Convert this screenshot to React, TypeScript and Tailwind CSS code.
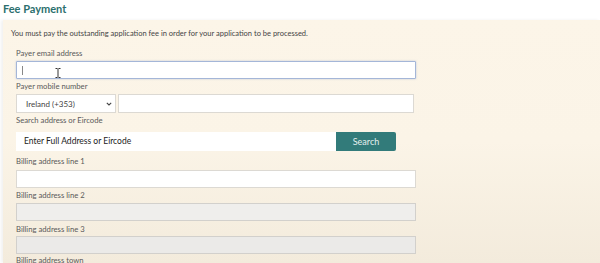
import React from "react";

function Label(props: { text: string; className?: string }) {
    return <div className={"h-[10px] leading-[13px] text-[7.7px] text-[#5a5a5a] " + (props.className ?? "")}>{props.text}</div>;
}

export default function App() {
    return (
        <div className="w-[600px] h-[263px] overflow-hidden bg-white" style={{ fontFamily: "Lato, 'Open Sans', sans-serif" }}>
            <h2 className="h-[20px] pl-[3px] pt-[2px] text-[11px] leading-[14px] font-bold text-[#2c6f6e]">Fee Payment</h2>
            <div className="relative ml-[3px] h-[243px] bg-gradient-to-b from-[#fcf5e8] via-[#fbf4e7] to-[#f3ebdc] pl-[8px] shadow-[-2px_0_3px_rgba(0,0,0,0.06)]">
                <div className="pt-[8px] h-[18px] leading-[12px] text-[7.5px] text-[#444]">
                    You must pay the outstanding application fee in order for your application to be processed.
                </div>
                <div className="pl-[5px] flex flex-col">
                    <Label text="Payer email address" className="mt-[9px]" />
                    <div className="relative mt-[4px] w-[400px] h-[18px] bg-white border border-[#a4b6d8] rounded-[1px] shadow-[0_0_2px_rgba(120,150,210,0.5)]">
                        <div className="absolute left-[5px] top-[4px] w-px h-[9px] bg-[#888]" />
                        <svg className="absolute left-[38px] top-[6px]" width="6" height="10" viewBox="0 0 6 10">
                            <path d="M0.5 0.5h2M3.5 0.5h2M3 0.8v8.4M0.5 9.5h2M3.5 9.5h2" stroke="#333" strokeWidth="1" fill="none" />
                        </svg>
                    </div>
                    <Label text="Payer mobile number" className="mt-[1px]" />
                    <div className="mt-[4px] flex gap-[2px] h-[19px]">
                        <div className="w-[100px] h-full bg-white border border-[#dcd9d3] flex items-center justify-between pl-[9px] pr-[3px]">
                            <span className="text-[8px] text-[#444]">Ireland (+353)</span>
                            <svg width="6" height="4" viewBox="0 0 6 4">
                                <path d="M0.8 0.8L3 3L5.2 0.8" stroke="#444" strokeWidth="1.1" fill="none" />
                            </svg>
                        </div>
                        <div className="w-[296px] h-full bg-white border border-[#dcd9d3]" />
                    </div>
                    <Label text="Search address or Eircode" className="mt-[1px]" />
                    <div className="mt-[8px] flex h-[19px]">
                        <div className="w-[320px] h-full bg-white flex items-center pl-[8px] text-[8.5px] text-[#222]">Enter Full Address or Eircode</div>
                        <div className="w-[60px] h-full bg-[#327b7a] rounded-r-[2px] flex items-center justify-center text-[9px] text-[#e4efee]">Search</div>
                    </div>
                    <Label text="Billing address line 1" className="mt-[4px]" />
                    <div className="mt-[5px] w-[400px] h-[18px] bg-white border border-[#dcd9d3]" />
                    <Label text="Billing address line 2" className="mt-[1px]" />
                    <div className="mt-[4px] w-[400px] h-[18px] bg-[#efeeec] border border-[#d2d0cc]" />
                    <Label text="Billing address line 3" className="mt-[2px]" />
                    <div className="mt-[3px] w-[400px] h-[18px] bg-[#ebeae8] border border-[#d2d0cc]" />
                    <Label text="Billing address town" />
                </div>
            </div>
        </div>
    );
}
